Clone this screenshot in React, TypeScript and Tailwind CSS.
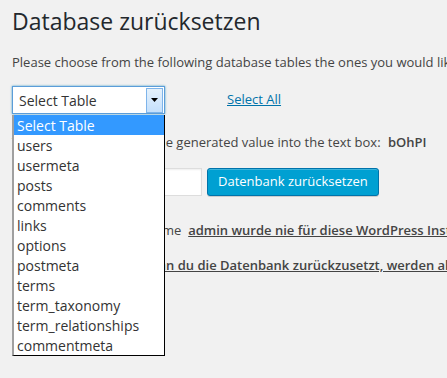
import { useState } from "react";

const TABLES = [
    "Select Table",
    "users",
    "usermeta",
    "posts",
    "comments",
    "links",
    "options",
    "postmeta",
    "terms",
    "term_taxonomy",
    "term_relationships",
    "commentmeta",
];

export default function App() {
    const [selected] = useState(0);

    return (
        <div className="h-[378px] w-[447px] overflow-hidden bg-[#f1f1f1] px-3 font-['Open_Sans',sans-serif] text-[13px] text-[#444]">
            <h1 className="mt-[7px] whitespace-nowrap text-[23px] leading-[29px] font-normal text-[#23282d]">
                Database zurücksetzen
            </h1>

            <p className="mt-4 whitespace-nowrap leading-5">
                Please choose from the following database tables the ones you would like to reset:
            </p>

            {/* Select row */}
            <div className="relative mt-[14px] flex items-center">
                <div className="flex h-[28px] w-[153px] items-center border border-[#5b9dd9] bg-white pl-[6px] pr-px shadow-[0_0_2px_rgba(30,140,190,0.8)]">
                    <span className="flex-1 text-[14px] text-[#333]">Select Table</span>
                    <span className="flex h-[25px] w-[17px] items-center justify-center border border-[#7eb4ea] bg-gradient-to-b from-[#e5f1fb] to-[#c4e0fc]">
                        <svg width="7" height="4" viewBox="0 0 7 4">
                            <path d="M0 0h7L3.5 4z" fill="#000" />
                        </svg>
                    </span>
                </div>
                <a href="#" className="ml-[62px] text-[#0073aa] underline">
                    Select All
                </a>

                {/* Open dropdown list */}
                <ul className="absolute left-0 top-[29px] z-10 w-[153px] border-b border-l-2 border-r border-b-black border-l-[#a0a0a0] border-r-black bg-white">
                    {TABLES.map((t, i) => (
                        <li
                            key={t}
                            className={`h-5 whitespace-nowrap pl-[3px] pt-px text-[14px] leading-5 ${
                                i === selected ? "bg-[#3399ff] text-white" : "text-[#333]"
                            }`}
                        >
                            {t}
                        </li>
                    ))}
                </ul>
            </div>

            <p className="mt-[18px] whitespace-nowrap leading-5">
                Type in (or copy/paste) the generated value into the text box:{" "}
                <b className="ml-1 font-semibold">bOhPI</b>
            </p>

            <div className="mt-4 flex items-center gap-[5px]">
                <input className="h-[28px] w-[190px] border border-[#ddd] bg-white shadow-[inset_0_1px_2px_rgba(0,0,0,0.07)] outline-none" />
                <button className="h-[28px] rounded-[3px] border border-[#0073aa] bg-[#00a0d2] px-[10px] text-[13px] text-white shadow-[inset_0_1px_0_rgba(120,200,230,0.5),0_1px_0_rgba(0,0,0,0.15)]">
                    Datenbank zurücksetzen
                </button>
            </div>

            <p className="mt-6 whitespace-nowrap leading-5">
                Hinweis: Der Benutzername &nbsp;
                <span className="font-semibold underline">
                    admin wurde nie für diese WordPress Installation angelegt.
                </span>
            </p>

            <p className="mt-[15px] whitespace-nowrap font-semibold leading-5 underline">
                Wichtiger Hinweis – Wenn du die Datenbank zurückzusetzt, werden alle Daten gelöscht.
            </p>
        </div>
    );
}
